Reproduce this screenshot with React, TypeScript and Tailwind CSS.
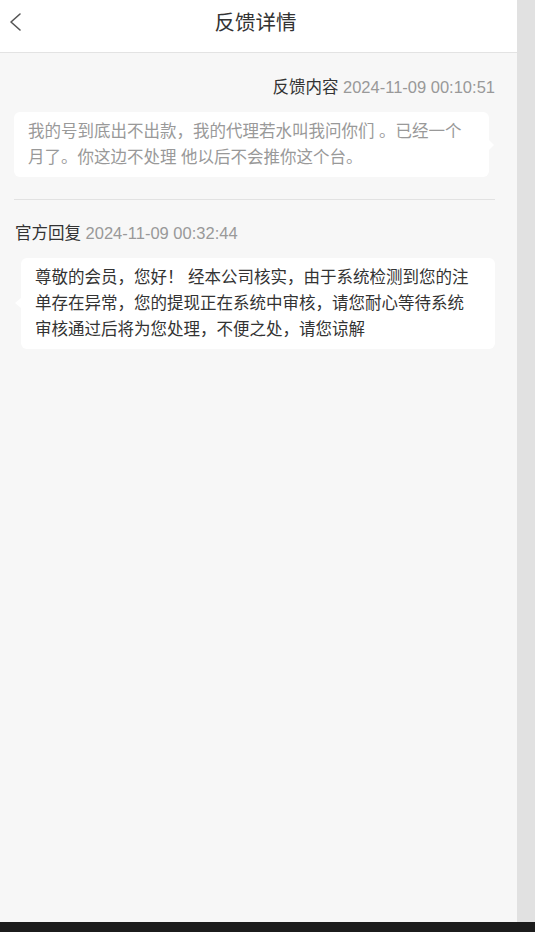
import React from 'react';

const FONT = { fontFamily: '"Liberation Sans", "Noto Sans CJK SC", sans-serif' };

const FeedbackDetail: React.FC = () => {
  return (
    <div className="flex flex-col w-[535px] h-[932px] overflow-hidden" style={FONT}>
      <div className="flex flex-1 min-h-0">
        {/* Main page */}
        <div className="w-[517px] flex flex-col bg-[#f7f7f7]">
          {/* Header */}
          <div className="relative h-[53px] bg-white border-b border-[#e3e3e3] flex items-center justify-center">
            <button className="absolute left-[6px] top-[10px] w-[24px] h-[24px] flex items-center justify-center">
              <svg width="24" height="24" viewBox="0 0 24 24" fill="none">
                <polyline points="14,4 5,12 14,20" stroke="#555" strokeWidth="1.6" strokeLinecap="round" strokeLinejoin="round" />
              </svg>
            </button>
            <h1 className="text-[20.5px] text-[#333] pb-[5px] pr-[6px]">反馈详情</h1>
          </div>

          {/* Content */}
          <div className="pl-[14px] pr-[22px] pt-[22px]">
            <div className="text-right text-[16.5px] leading-[24px]">
              <span className="text-[#333]">反馈内容</span>{' '}
              <span className="text-[#999]">2024-11-09 00:10:51</span>
            </div>

            <div className="relative mt-[13px] mr-[6px] bg-white rounded-[6px] pl-[14px] pr-[24px] pt-[6px] pb-[7px]">
              <p className="text-[16.5px] leading-[26px] text-[#999]">
                我的号到底出不出款，我的代理若水叫我问你们 。已经一个月了。你这边不处理 他以后不会推你这个台。
              </p>
              <span className="absolute right-[-5px] top-[28px] w-0 h-0 border-y-[5px] border-y-transparent border-l-[5px] border-l-white" />
            </div>

            <div className="mt-[22px] h-px bg-[#e2e2e2]" />

            <div className="mt-[21px] text-[16.5px] leading-[24px] pl-[1px]">
              <span className="text-[#333]">官方回复</span>{' '}
              <span className="text-[#999]">2024-11-09 00:32:44</span>
            </div>

            <div className="relative mt-[13px] ml-[7px] bg-white rounded-[6px] pl-[14px] pr-[24px] pt-[6px] pb-[7px]">
              <p className="text-[16.5px] leading-[26px] text-[#333]">
                尊敬的会员，您好！ 经本公司核实，由于系统检测到您的注单存在异常，您的提现正在系统中审核，请您耐心等待系统审核通过后将为您处理，不便之处，请您谅解
              </p>
              <span className="absolute left-[-6px] top-[40px] w-0 h-0 border-y-[5px] border-y-transparent border-r-[6px] border-r-white" />
            </div>
          </div>
        </div>

        {/* Scrollbar strip */}
        <div className="w-[18px] bg-[#e1e1e1]" />
      </div>
      <div className="h-[10px] bg-[#1c1c1c]" />
    </div>
  );
};

export default function App() {
  return <FeedbackDetail />;
}
